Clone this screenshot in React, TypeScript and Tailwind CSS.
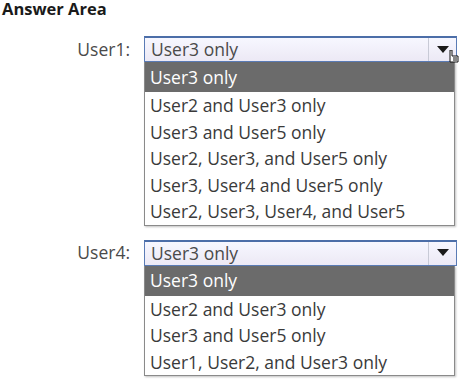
import React from 'react';

type Dropdown = {
  label: string;
  value: string;
  options: string[];
};

const dropdowns: Dropdown[] = [
  {
    label: 'User1:',
    value: 'User3 only',
    options: [
      'User3 only',
      'User2 and User3 only',
      'User3 and User5 only',
      'User2, User3, and User5 only',
      'User3, User4 and User5 only',
      'User2, User3, User4, and User5',
    ],
  },
  {
    label: 'User4:',
    value: 'User3 only',
    options: ['User3 only', 'User2 and User3 only', 'User3 and User5 only', 'User1, User2, and User3 only'],
  },
];

function Arrow() {
  return (
    <svg width="12" height="8" viewBox="0 0 12 8">
      <path d="M0 0 L12 0 L6 7 Z" fill="#1a1a1a" />
    </svg>
  );
}

function Cursor() {
  return (
    <svg width="12" height="14" viewBox="0 0 12 14" className="absolute right-[-4px] top-[12px]">
      <path d="M2 0 L4 0 L4 6 L10 6 L10 12 L2 12 Z" fill="#ffffff" stroke="#111" strokeWidth="1" />
      <path d="M6 7 L6 11 M8 7 L8 11" stroke="#111" strokeWidth="1" />
    </svg>
  );
}

export default function App() {
  return (
    <div className="w-[462px] h-[381px] bg-white overflow-hidden" style={{ fontFamily: '"Open Sans", "Noto Sans", sans-serif' }}>
      <div className="pl-[2px] h-[36px] text-[16.5px] leading-[18px] font-bold text-[#1a1a1a]">Answer Area</div>

      <div className="flex flex-col gap-[14px]">
        {dropdowns.map((d, i) => (
          <div key={d.label} className="flex items-start">
            <div className="w-[131px] pr-[1px] h-[26px] flex items-center justify-end text-[17.5px] text-[#4a4a4a]">{d.label}</div>
            <div className="ml-[13px] w-[313px] flex flex-col">
              <div className="relative h-[26px] flex border border-[#5a7bb5] border-t-2 border-t-[#4c6ea8] bg-gradient-to-b from-[#f7f7ff] to-[#ece9f5]">
                <div className="flex-1 flex items-center pl-[6px] text-[17.5px] text-[#4a4a4a]">{d.value}</div>
                <div className="w-[28px] border-l border-[#c8cad6] flex items-center justify-center">
                  <Arrow />
                </div>
                {i === 0 && <Cursor />}
              </div>
              <div className="mr-[2px] border border-[#8a8a8a] border-t-0 bg-white shadow-[1px_1px_2px_rgba(0,0,0,0.25)]">
                {d.options.map((o, j) => (
                  <div
                    key={o}
                    className={
                      j === 0
                        ? 'h-[30px] flex items-center pl-[5px] text-[17.5px] bg-[#6b6b6b] text-white'
                        : 'h-[26.5px] flex items-center pl-[5px] text-[17.5px] text-[#3a3a3a]'
                    }
                  >
                    {o}
                  </div>
                ))}
              </div>
            </div>
          </div>
        ))}
      </div>
    </div>
  );
}
